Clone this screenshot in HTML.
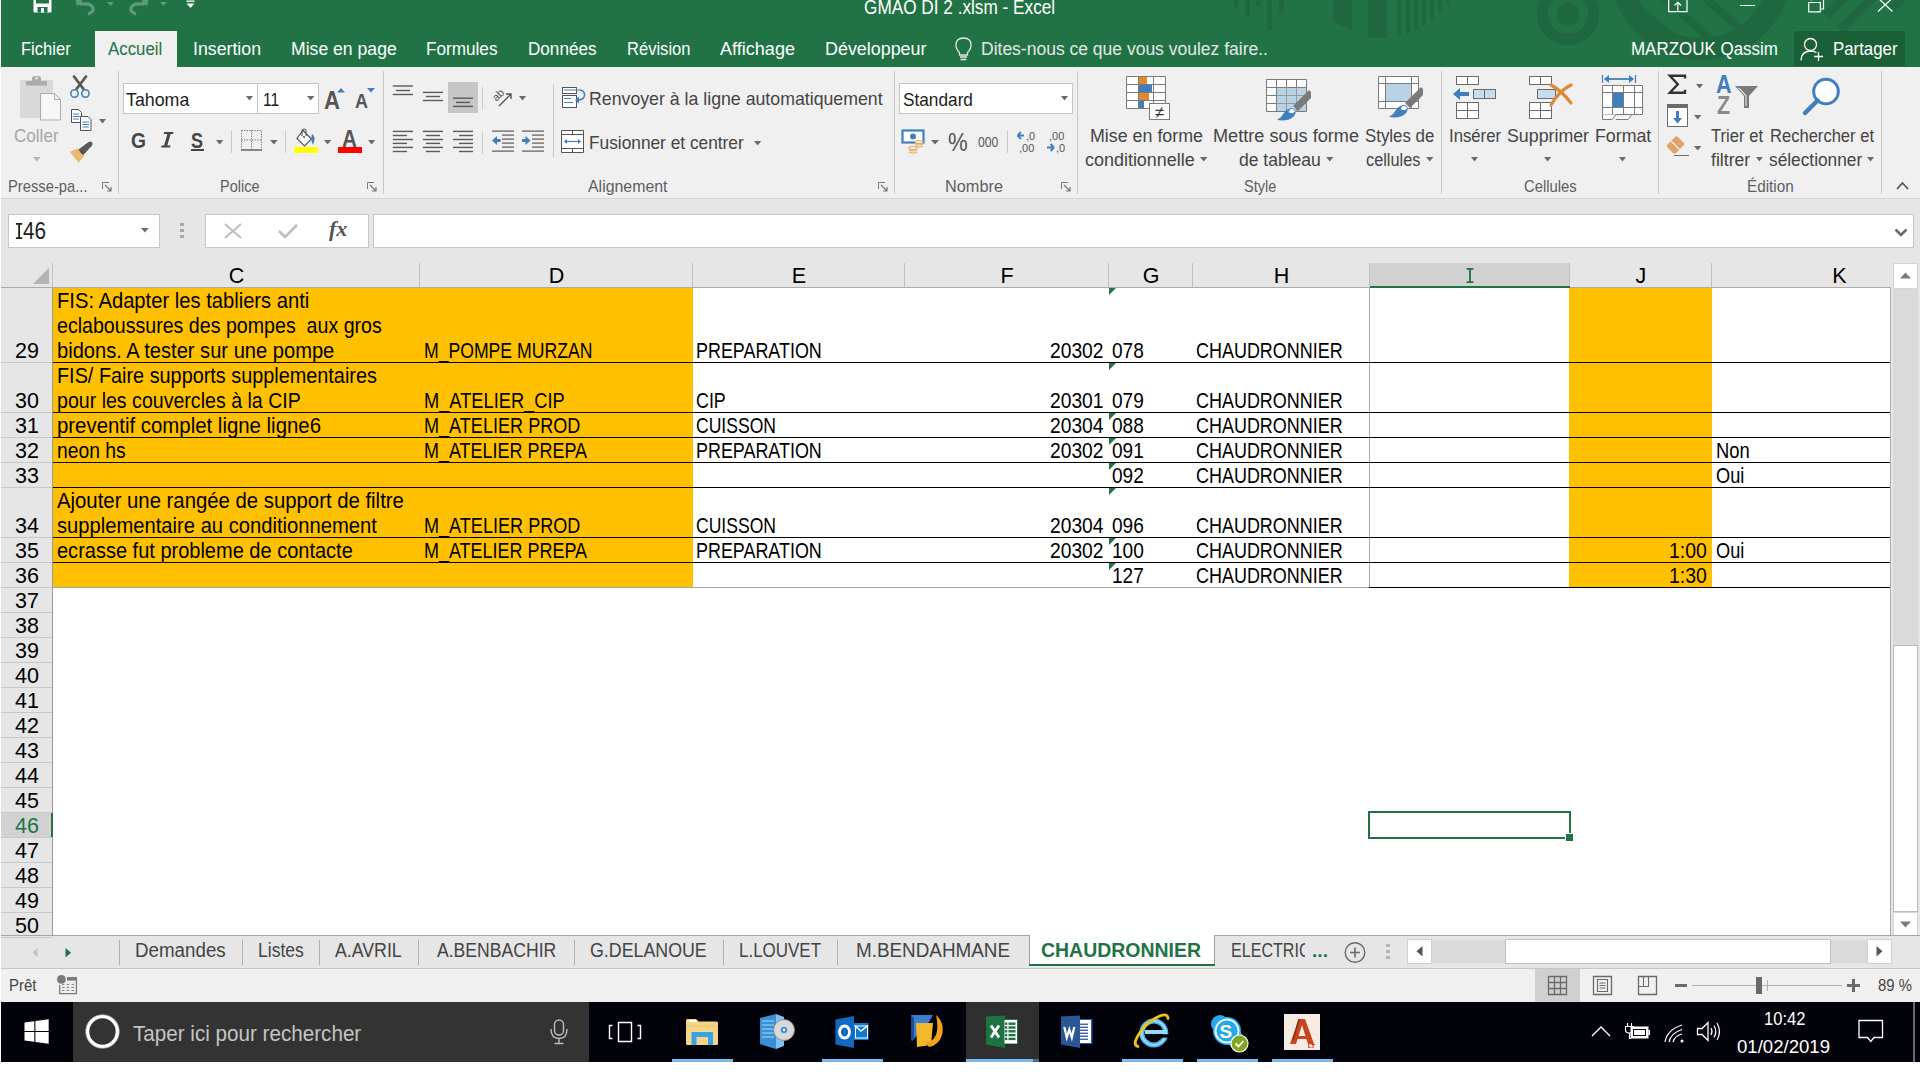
<!DOCTYPE html><html><head><meta charset="utf-8"><style>
html,body{margin:0;padding:0;width:1920px;height:1080px;overflow:hidden;background:#fff;}
body{position:relative;font-family:"Liberation Sans",sans-serif;}
.t{position:absolute;white-space:pre;transform-origin:0 0;}
.r{position:absolute;}
svg.r{overflow:visible;}
</style></head><body>
<div class="r" style="left:1px;top:0px;width:1919px;height:67px;background:#217346;"></div>
<svg class="r" style="left:1200px;top:0px;" width="720" height="67" viewBox="0 0 720 67">
<g fill="#1f683f">
<rect x="34" y="0" width="4" height="7"/><rect x="45" y="0" width="5" height="17"/><rect x="56" y="0" width="5" height="6"/>
<rect x="67" y="0" width="5" height="30"/><rect x="79" y="0" width="5" height="13"/>
<path d="M133 0H152V31L133 21Z"/><rect x="168" y="0" width="19" height="38"/>
<rect x="197" y="0" width="4" height="36"/><rect x="206" y="0" width="4" height="33"/><rect x="214" y="0" width="4" height="30"/>
<rect x="222" y="0" width="4" height="25"/><rect x="230" y="0" width="4" height="21"/><rect x="238" y="0" width="4" height="13"/><rect x="246" y="0" width="3" height="4"/>
</g>
<circle cx="368" cy="14" r="25.5" fill="none" stroke="#1f683f" stroke-width="11"/>
<circle cx="368" cy="14" r="11.5" fill="#1f683f"/>
<clipPath id="inring"><circle cx="501" cy="-31" r="69"/></clipPath>
<circle cx="501" cy="-31" r="80" fill="none" stroke="#1f683f" stroke-width="22"/>
<g stroke="#1f683f" stroke-width="8" clip-path="url(#inring)">
<path d="M432 2 L500 62"/><path d="M455 -10 L525 52"/><path d="M485 -20 L550 38"/>
</g>
<g stroke="#1f683f" stroke-width="9">
<path d="M626 16 L652 -10"/><path d="M640 30 L682 -12"/><path d="M690 10 L720 -20"/>
</g>
</svg>
<div class="r" style="left:95px;top:31px;width:82px;height:36px;background:#f0f0f0;"></div>
<div class="r" style="left:1794px;top:31px;width:111px;height:35px;background:#1a5f36;"></div>
<div class="r" style="left:1px;top:67px;width:1919px;height:131px;background:#f0f0f0;"></div>
<div class="r" style="left:1px;top:198px;width:1919px;height:1px;background:#d5d5d5;"></div>
<div class="r" style="left:1px;top:199px;width:1919px;height:64px;background:#e6e6e6;"></div>
<div class="r" style="left:1px;top:263px;width:1892px;height:25px;background:#e6e6e6;"></div>
<div class="r" style="left:1px;top:288px;width:52px;height:648px;background:#e6e6e6;"></div>
<div class="r" style="left:53px;top:288px;width:1838px;height:647px;background:#ffffff;"></div>
<div class="r" style="left:1891px;top:263px;width:29px;height:673px;background:#e6e6e6;"></div>
<div class="r" style="left:1px;top:935px;width:1919px;height:1px;background:#a6a6a6;"></div>
<div class="r" style="left:1px;top:936px;width:1919px;height:32px;background:#e6e6e6;"></div>
<div class="r" style="left:1px;top:968px;width:1919px;height:1px;background:#c6c6c6;"></div>
<div class="r" style="left:1px;top:969px;width:1919px;height:33px;background:#f0f0f0;"></div>
<div class="r" style="left:1px;top:1002px;width:1919px;height:60px;background:#02030a;"></div>
<div class="r" style="left:419px;top:263px;width:1px;height:24px;background:#c0c0c0;"></div>
<div class="r" style="left:692px;top:263px;width:1px;height:24px;background:#c0c0c0;"></div>
<div class="r" style="left:904px;top:263px;width:1px;height:24px;background:#c0c0c0;"></div>
<div class="r" style="left:1108px;top:263px;width:1px;height:24px;background:#c0c0c0;"></div>
<div class="r" style="left:1192px;top:263px;width:1px;height:24px;background:#c0c0c0;"></div>
<div class="r" style="left:1369px;top:263px;width:1px;height:24px;background:#c0c0c0;"></div>
<div class="r" style="left:1569px;top:263px;width:1px;height:24px;background:#c0c0c0;"></div>
<div class="r" style="left:1711px;top:263px;width:1px;height:24px;background:#c0c0c0;"></div>
<div class="r" style="left:52px;top:263px;width:1px;height:24px;background:#c0c0c0;"></div>
<div class="r" style="left:1px;top:287px;width:1890px;height:1px;background:#ababab;"></div>
<div class="r" style="left:1370px;top:263px;width:199px;height:23px;background:#d2d2d2;"></div>
<div class="r" style="left:1370px;top:286px;width:200px;height:2px;background:#217346;"></div>
<div class="t" style="left:228.73px;top:266.49px;font-size:21.51px;line-height:21.51px;color:#000;">C</div>
<div class="t" style="left:548.73px;top:266.49px;font-size:21.51px;line-height:21.51px;color:#000;">D</div>
<div class="t" style="left:791.83px;top:266.49px;font-size:21.51px;line-height:21.51px;color:#000;">E</div>
<div class="t" style="left:1000.43px;top:266.49px;font-size:21.51px;line-height:21.51px;color:#000;">F</div>
<div class="t" style="left:1142.63px;top:266.49px;font-size:21.51px;line-height:21.51px;color:#000;">G</div>
<div class="t" style="left:1273.73px;top:266.49px;font-size:21.51px;line-height:21.51px;color:#000;">H</div>
<svg class="r" style="left:1466px;top:268px;" width="8" height="15" viewBox="0 0 8 15"><path d="M0.5 0.9H7.5M0.5 14.1H7.5M4 0.9V14.1" stroke="#217346" stroke-width="1.9"/></svg>
<div class="t" style="left:1635.62px;top:266.49px;font-size:21.51px;line-height:21.51px;color:#000;">J</div>
<div class="t" style="left:1832.33px;top:266.49px;font-size:21.51px;line-height:21.51px;color:#000;">K</div>
<svg class="r" style="left:32px;top:267px;" width="18" height="18" viewBox="0 0 18 18"><path d="M17 1V17H1Z" fill="#b4b4b4"/></svg>
<div class="r" style="left:52px;top:288px;width:1px;height:648px;background:#9b9b9b;"></div>
<div class="r" style="left:1px;top:362px;width:51px;height:1px;background:#c8c8c8;"></div>
<div class="r" style="left:1px;top:412px;width:51px;height:1px;background:#c8c8c8;"></div>
<div class="r" style="left:1px;top:437px;width:51px;height:1px;background:#c8c8c8;"></div>
<div class="r" style="left:1px;top:462px;width:51px;height:1px;background:#c8c8c8;"></div>
<div class="r" style="left:1px;top:487px;width:51px;height:1px;background:#c8c8c8;"></div>
<div class="r" style="left:1px;top:537px;width:51px;height:1px;background:#c8c8c8;"></div>
<div class="r" style="left:1px;top:562px;width:51px;height:1px;background:#c8c8c8;"></div>
<div class="r" style="left:1px;top:587px;width:51px;height:1px;background:#c8c8c8;"></div>
<div class="r" style="left:1px;top:612px;width:51px;height:1px;background:#c8c8c8;"></div>
<div class="r" style="left:1px;top:637px;width:51px;height:1px;background:#c8c8c8;"></div>
<div class="r" style="left:1px;top:662px;width:51px;height:1px;background:#c8c8c8;"></div>
<div class="r" style="left:1px;top:687px;width:51px;height:1px;background:#c8c8c8;"></div>
<div class="r" style="left:1px;top:712px;width:51px;height:1px;background:#c8c8c8;"></div>
<div class="r" style="left:1px;top:737px;width:51px;height:1px;background:#c8c8c8;"></div>
<div class="r" style="left:1px;top:762px;width:51px;height:1px;background:#c8c8c8;"></div>
<div class="r" style="left:1px;top:787px;width:51px;height:1px;background:#c8c8c8;"></div>
<div class="r" style="left:1px;top:812px;width:51px;height:1px;background:#c8c8c8;"></div>
<div class="r" style="left:1px;top:837px;width:51px;height:1px;background:#c8c8c8;"></div>
<div class="r" style="left:1px;top:862px;width:51px;height:1px;background:#c8c8c8;"></div>
<div class="r" style="left:1px;top:887px;width:51px;height:1px;background:#c8c8c8;"></div>
<div class="r" style="left:1px;top:912px;width:51px;height:1px;background:#c8c8c8;"></div>
<div class="r" style="left:1px;top:937px;width:51px;height:1px;background:#c8c8c8;"></div>
<div class="t" style="left:15.04px;top:341.19px;font-size:21.51px;line-height:21.51px;color:#000;">29</div>
<div class="t" style="left:15.04px;top:391.19px;font-size:21.51px;line-height:21.51px;color:#000;">30</div>
<div class="t" style="left:15.04px;top:416.19px;font-size:21.51px;line-height:21.51px;color:#000;">31</div>
<div class="t" style="left:15.04px;top:441.19px;font-size:21.51px;line-height:21.51px;color:#000;">32</div>
<div class="t" style="left:15.04px;top:466.19px;font-size:21.51px;line-height:21.51px;color:#000;">33</div>
<div class="t" style="left:15.04px;top:516.19px;font-size:21.51px;line-height:21.51px;color:#000;">34</div>
<div class="t" style="left:15.04px;top:541.19px;font-size:21.51px;line-height:21.51px;color:#000;">35</div>
<div class="t" style="left:15.04px;top:566.19px;font-size:21.51px;line-height:21.51px;color:#000;">36</div>
<div class="t" style="left:15.04px;top:591.19px;font-size:21.51px;line-height:21.51px;color:#000;">37</div>
<div class="t" style="left:15.04px;top:616.19px;font-size:21.51px;line-height:21.51px;color:#000;">38</div>
<div class="t" style="left:15.04px;top:641.19px;font-size:21.51px;line-height:21.51px;color:#000;">39</div>
<div class="t" style="left:15.04px;top:666.19px;font-size:21.51px;line-height:21.51px;color:#000;">40</div>
<div class="t" style="left:15.04px;top:691.19px;font-size:21.51px;line-height:21.51px;color:#000;">41</div>
<div class="t" style="left:15.04px;top:716.19px;font-size:21.51px;line-height:21.51px;color:#000;">42</div>
<div class="t" style="left:15.04px;top:741.19px;font-size:21.51px;line-height:21.51px;color:#000;">43</div>
<div class="t" style="left:15.04px;top:766.19px;font-size:21.51px;line-height:21.51px;color:#000;">44</div>
<div class="t" style="left:15.04px;top:791.19px;font-size:21.51px;line-height:21.51px;color:#000;">45</div>
<div class="r" style="left:1px;top:813px;width:50px;height:24px;background:#d2d2d2;"></div>
<div class="r" style="left:51px;top:813px;width:2px;height:24px;background:#217346;"></div>
<div class="t" style="left:15.04px;top:816.19px;font-size:21.51px;line-height:21.51px;color:#217346;">46</div>
<div class="t" style="left:15.04px;top:841.19px;font-size:21.51px;line-height:21.51px;color:#000;">47</div>
<div class="t" style="left:15.04px;top:866.19px;font-size:21.51px;line-height:21.51px;color:#000;">48</div>
<div class="t" style="left:15.04px;top:891.19px;font-size:21.51px;line-height:21.51px;color:#000;">49</div>
<div class="t" style="left:15.04px;top:916.19px;font-size:21.51px;line-height:21.51px;color:#000;">50</div>
<div class="r" style="left:53px;top:288px;width:640px;height:299px;background:#ffc000;"></div>
<div class="r" style="left:1569px;top:288px;width:143px;height:299px;background:#ffc000;"></div>
<div class="r" style="left:1369px;top:288px;width:1px;height:300px;background:#a6a6a6;"></div>
<div class="r" style="left:53px;top:362px;width:1838px;height:1px;background:#000;"></div>
<div class="r" style="left:53px;top:412px;width:1838px;height:1px;background:#000;"></div>
<div class="r" style="left:53px;top:437px;width:1838px;height:1px;background:#000;"></div>
<div class="r" style="left:53px;top:462px;width:1838px;height:1px;background:#000;"></div>
<div class="r" style="left:53px;top:487px;width:1838px;height:1px;background:#000;"></div>
<div class="r" style="left:53px;top:537px;width:1838px;height:1px;background:#000;"></div>
<div class="r" style="left:53px;top:562px;width:1838px;height:1px;background:#000;"></div>
<div class="r" style="left:53px;top:587px;width:1316px;height:1px;background:#a6a6a6;"></div>
<div class="r" style="left:1369px;top:587px;width:522px;height:1px;background:#000;"></div>
<svg class="r" style="left:1109px;top:288px;" width="8" height="8" viewBox="0 0 8 8"><path d="M0 0H7L0 7Z" fill="#217346"/></svg>
<svg class="r" style="left:1109px;top:363px;" width="8" height="8" viewBox="0 0 8 8"><path d="M0 0H7L0 7Z" fill="#217346"/></svg>
<svg class="r" style="left:1109px;top:413px;" width="8" height="8" viewBox="0 0 8 8"><path d="M0 0H7L0 7Z" fill="#217346"/></svg>
<svg class="r" style="left:1109px;top:438px;" width="8" height="8" viewBox="0 0 8 8"><path d="M0 0H7L0 7Z" fill="#217346"/></svg>
<svg class="r" style="left:1109px;top:463px;" width="8" height="8" viewBox="0 0 8 8"><path d="M0 0H7L0 7Z" fill="#217346"/></svg>
<svg class="r" style="left:1109px;top:488px;" width="8" height="8" viewBox="0 0 8 8"><path d="M0 0H7L0 7Z" fill="#217346"/></svg>
<svg class="r" style="left:1109px;top:538px;" width="8" height="8" viewBox="0 0 8 8"><path d="M0 0H7L0 7Z" fill="#217346"/></svg>
<svg class="r" style="left:1109px;top:563px;" width="8" height="8" viewBox="0 0 8 8"><path d="M0 0H7L0 7Z" fill="#217346"/></svg>
<div class="t" style="left:56.70px;top:290.24px;font-size:21.22px;line-height:21.22px;color:#000;transform:scaleX(0.9507);">FIS: Adapter les tabliers anti</div>
<div class="t" style="left:56.70px;top:315.24px;font-size:21.22px;line-height:21.22px;color:#000;transform:scaleX(0.9240);">eclaboussures des pompes  aux gros</div>
<div class="t" style="left:56.70px;top:340.24px;font-size:21.22px;line-height:21.22px;color:#000;transform:scaleX(0.9478);">bidons. A tester sur une pompe</div>
<div class="t" style="left:56.70px;top:365.24px;font-size:21.22px;line-height:21.22px;color:#000;transform:scaleX(0.9353);">FIS/ Faire supports supplementaires</div>
<div class="t" style="left:56.70px;top:390.24px;font-size:21.22px;line-height:21.22px;color:#000;transform:scaleX(0.9228);">pour les couvercles à la CIP</div>
<div class="t" style="left:56.70px;top:415.24px;font-size:21.22px;line-height:21.22px;color:#000;transform:scaleX(0.9605);">preventif complet ligne ligne6</div>
<div class="t" style="left:56.70px;top:440.24px;font-size:21.22px;line-height:21.22px;color:#000;transform:scaleX(0.9110);">neon hs</div>
<div class="t" style="left:56.70px;top:490.24px;font-size:21.22px;line-height:21.22px;color:#000;transform:scaleX(0.9578);">Ajouter une rangée de support de filtre</div>
<div class="t" style="left:56.70px;top:515.24px;font-size:21.22px;line-height:21.22px;color:#000;transform:scaleX(0.9514);">supplementaire au conditionnement</div>
<div class="t" style="left:56.70px;top:540.24px;font-size:21.22px;line-height:21.22px;color:#000;transform:scaleX(0.9427);">ecrasse fut probleme de contacte</div>
<div class="t" style="left:423.60px;top:340.24px;font-size:21.22px;line-height:21.22px;color:#000;transform:scaleX(0.8304);">M_POMPE MURZAN</div>
<div class="t" style="left:423.60px;top:390.24px;font-size:21.22px;line-height:21.22px;color:#000;transform:scaleX(0.8604);">M_ATELIER_CIP</div>
<div class="t" style="left:423.60px;top:415.24px;font-size:21.22px;line-height:21.22px;color:#000;transform:scaleX(0.8520);">M_ATELIER PROD</div>
<div class="t" style="left:423.60px;top:440.24px;font-size:21.22px;line-height:21.22px;color:#000;transform:scaleX(0.8467);">M_ATELIER PREPA</div>
<div class="t" style="left:423.60px;top:515.24px;font-size:21.22px;line-height:21.22px;color:#000;transform:scaleX(0.8520);">M_ATELIER PROD</div>
<div class="t" style="left:423.60px;top:540.24px;font-size:21.22px;line-height:21.22px;color:#000;transform:scaleX(0.8467);">M_ATELIER PREPA</div>
<div class="t" style="left:696.00px;top:340.24px;font-size:21.22px;line-height:21.22px;color:#000;transform:scaleX(0.8445);">PREPARATION</div>
<div class="t" style="left:696.00px;top:390.24px;font-size:21.22px;line-height:21.22px;color:#000;transform:scaleX(0.8424);">CIP</div>
<div class="t" style="left:696.00px;top:415.24px;font-size:21.22px;line-height:21.22px;color:#000;transform:scaleX(0.8275);">CUISSON</div>
<div class="t" style="left:696.00px;top:440.24px;font-size:21.22px;line-height:21.22px;color:#000;transform:scaleX(0.8445);">PREPARATION</div>
<div class="t" style="left:696.00px;top:515.24px;font-size:21.22px;line-height:21.22px;color:#000;transform:scaleX(0.8275);">CUISSON</div>
<div class="t" style="left:696.00px;top:540.24px;font-size:21.22px;line-height:21.22px;color:#000;transform:scaleX(0.8445);">PREPARATION</div>
<div class="t" style="left:1050.40px;top:340.24px;font-size:21.22px;line-height:21.22px;color:#000;transform:scaleX(0.9065);">20302</div>
<div class="t" style="left:1050.40px;top:390.24px;font-size:21.22px;line-height:21.22px;color:#000;transform:scaleX(0.9065);">20301</div>
<div class="t" style="left:1050.40px;top:415.24px;font-size:21.22px;line-height:21.22px;color:#000;transform:scaleX(0.9065);">20304</div>
<div class="t" style="left:1050.40px;top:440.24px;font-size:21.22px;line-height:21.22px;color:#000;transform:scaleX(0.9065);">20302</div>
<div class="t" style="left:1050.40px;top:515.24px;font-size:21.22px;line-height:21.22px;color:#000;transform:scaleX(0.9065);">20304</div>
<div class="t" style="left:1050.40px;top:540.24px;font-size:21.22px;line-height:21.22px;color:#000;transform:scaleX(0.9065);">20302</div>
<div class="t" style="left:1112.40px;top:340.24px;font-size:21.22px;line-height:21.22px;color:#000;transform:scaleX(0.8984);">078</div>
<div class="t" style="left:1112.40px;top:390.24px;font-size:21.22px;line-height:21.22px;color:#000;transform:scaleX(0.8984);">079</div>
<div class="t" style="left:1112.40px;top:415.24px;font-size:21.22px;line-height:21.22px;color:#000;transform:scaleX(0.8984);">088</div>
<div class="t" style="left:1112.40px;top:440.24px;font-size:21.22px;line-height:21.22px;color:#000;transform:scaleX(0.8984);">091</div>
<div class="t" style="left:1112.40px;top:465.24px;font-size:21.22px;line-height:21.22px;color:#000;transform:scaleX(0.8984);">092</div>
<div class="t" style="left:1112.40px;top:515.24px;font-size:21.22px;line-height:21.22px;color:#000;transform:scaleX(0.8984);">096</div>
<div class="t" style="left:1112.40px;top:540.24px;font-size:21.22px;line-height:21.22px;color:#000;transform:scaleX(0.8984);">100</div>
<div class="t" style="left:1112.40px;top:565.24px;font-size:21.22px;line-height:21.22px;color:#000;transform:scaleX(0.8984);">127</div>
<div class="t" style="left:1195.80px;top:340.24px;font-size:21.22px;line-height:21.22px;color:#000;transform:scaleX(0.8465);">CHAUDRONNIER</div>
<div class="t" style="left:1195.80px;top:390.24px;font-size:21.22px;line-height:21.22px;color:#000;transform:scaleX(0.8465);">CHAUDRONNIER</div>
<div class="t" style="left:1195.80px;top:415.24px;font-size:21.22px;line-height:21.22px;color:#000;transform:scaleX(0.8465);">CHAUDRONNIER</div>
<div class="t" style="left:1195.80px;top:440.24px;font-size:21.22px;line-height:21.22px;color:#000;transform:scaleX(0.8465);">CHAUDRONNIER</div>
<div class="t" style="left:1195.80px;top:465.24px;font-size:21.22px;line-height:21.22px;color:#000;transform:scaleX(0.8465);">CHAUDRONNIER</div>
<div class="t" style="left:1195.80px;top:515.24px;font-size:21.22px;line-height:21.22px;color:#000;transform:scaleX(0.8465);">CHAUDRONNIER</div>
<div class="t" style="left:1195.80px;top:540.24px;font-size:21.22px;line-height:21.22px;color:#000;transform:scaleX(0.8465);">CHAUDRONNIER</div>
<div class="t" style="left:1195.80px;top:565.24px;font-size:21.22px;line-height:21.22px;color:#000;transform:scaleX(0.8465);">CHAUDRONNIER</div>
<div class="t" style="left:1715.70px;top:440.24px;font-size:21.22px;line-height:21.22px;color:#000;transform:scaleX(0.8659);">Non</div>
<div class="t" style="left:1715.70px;top:465.24px;font-size:21.22px;line-height:21.22px;color:#000;transform:scaleX(0.8571);">Oui</div>
<div class="t" style="left:1715.70px;top:540.24px;font-size:21.22px;line-height:21.22px;color:#000;transform:scaleX(0.8571);">Oui</div>
<div class="t" style="left:1669.40px;top:540.24px;font-size:21.22px;line-height:21.22px;color:#000;transform:scaleX(0.9153);">1:00</div>
<div class="t" style="left:1669.40px;top:565.24px;font-size:21.22px;line-height:21.22px;color:#000;transform:scaleX(0.9153);">1:30</div>
<div class="r" style="left:1368px;top:811px;width:203px;height:28px;border:2px solid #217346;box-sizing:border-box;"></div>
<div class="r" style="left:1566px;top:834px;width:7px;height:7px;background:#217346;outline:1px solid #fff;"></div>
<div class="t" style="left:864.40px;top:-3.25px;font-size:20.49px;line-height:20.49px;color:#fff;transform:scaleX(0.8396);">GMAO DI 2 .xlsm - Excel</div>
<div class="t" style="left:20.50px;top:39.96px;font-size:18.90px;line-height:18.90px;color:#fff;transform:scaleX(0.8773);">Fichier</div>
<div class="t" style="left:108.25px;top:39.96px;font-size:18.90px;line-height:18.90px;color:#217346;transform:scaleX(0.8905);">Accueil</div>
<div class="t" style="left:192.50px;top:39.96px;font-size:18.90px;line-height:18.90px;color:#fff;transform:scaleX(0.9384);">Insertion</div>
<div class="t" style="left:290.50px;top:39.96px;font-size:18.90px;line-height:18.90px;color:#fff;transform:scaleX(0.9321);">Mise en page</div>
<div class="t" style="left:425.50px;top:39.96px;font-size:18.90px;line-height:18.90px;color:#fff;transform:scaleX(0.9079);">Formules</div>
<div class="t" style="left:527.50px;top:39.96px;font-size:18.90px;line-height:18.90px;color:#fff;transform:scaleX(0.9056);">Données</div>
<div class="t" style="left:627.00px;top:39.96px;font-size:18.90px;line-height:18.90px;color:#fff;transform:scaleX(0.8763);">Révision</div>
<div class="t" style="left:720.00px;top:39.96px;font-size:18.90px;line-height:18.90px;color:#fff;transform:scaleX(0.9562);">Affichage</div>
<div class="t" style="left:824.50px;top:39.96px;font-size:18.90px;line-height:18.90px;color:#fff;transform:scaleX(0.9474);">Développeur</div>
<div class="t" style="left:980.50px;top:39.96px;font-size:18.90px;line-height:18.90px;color:#e6e6e6;transform:scaleX(0.9263);">Dites-nous ce que vous voulez faire..</div>
<div class="t" style="left:1630.50px;top:39.96px;font-size:18.90px;line-height:18.90px;color:#fff;transform:scaleX(0.8976);">MARZOUK Qassim</div>
<div class="t" style="left:1832.50px;top:39.96px;font-size:18.90px;line-height:18.90px;color:#fff;transform:scaleX(0.8901);">Partager</div>
<div class="t" style="left:7.75px;top:179.42px;font-size:15.99px;line-height:15.99px;color:#5e5e5e;transform:scaleX(0.9223);">Presse-pa...</div>
<div class="t" style="left:219.50px;top:179.42px;font-size:15.99px;line-height:15.99px;color:#5e5e5e;transform:scaleX(0.9070);">Police</div>
<div class="t" style="left:587.50px;top:179.42px;font-size:15.99px;line-height:15.99px;color:#5e5e5e;transform:scaleX(0.9939);">Alignement</div>
<div class="t" style="left:945.00px;top:179.42px;font-size:15.99px;line-height:15.99px;color:#5e5e5e;transform:scaleX(1.0199);">Nombre</div>
<div class="t" style="left:1243.75px;top:179.42px;font-size:15.99px;line-height:15.99px;color:#5e5e5e;transform:scaleX(0.9074);">Style</div>
<div class="t" style="left:1523.50px;top:179.42px;font-size:15.99px;line-height:15.99px;color:#5e5e5e;transform:scaleX(0.9275);">Cellules</div>
<div class="t" style="left:1746.70px;top:179.42px;font-size:15.99px;line-height:15.99px;color:#5e5e5e;transform:scaleX(0.9552);">Édition</div>
<div class="t" style="left:14.40px;top:127.08px;font-size:18.75px;line-height:18.75px;color:#a6a6a6;transform:scaleX(0.9107);">Coller</div>
<div class="t" style="left:589.00px;top:88.98px;font-size:19.04px;line-height:19.04px;color:#444444;transform:scaleX(0.9313);">Renvoyer à la ligne automatiquement</div>
<div class="t" style="left:589.00px;top:132.68px;font-size:19.04px;line-height:19.04px;color:#444444;transform:scaleX(0.9082);">Fusionner et centrer</div>
<div class="t" style="left:1090.00px;top:127.08px;font-size:18.75px;line-height:18.75px;color:#444444;transform:scaleX(0.9513);">Mise en forme</div>
<div class="t" style="left:1084.75px;top:150.83px;font-size:18.75px;line-height:18.75px;color:#444444;transform:scaleX(0.9571);">conditionnelle</div>
<div class="t" style="left:1213.00px;top:127.08px;font-size:18.75px;line-height:18.75px;color:#444444;transform:scaleX(0.9663);">Mettre sous forme</div>
<div class="t" style="left:1238.75px;top:150.83px;font-size:18.75px;line-height:18.75px;color:#444444;transform:scaleX(0.9346);">de tableau</div>
<div class="t" style="left:1364.75px;top:127.08px;font-size:18.75px;line-height:18.75px;color:#444444;transform:scaleX(0.8980);">Styles de</div>
<div class="t" style="left:1365.60px;top:150.83px;font-size:18.75px;line-height:18.75px;color:#444444;transform:scaleX(0.8700);">cellules</div>
<div class="t" style="left:1449.00px;top:127.08px;font-size:18.75px;line-height:18.75px;color:#444444;transform:scaleX(0.8912);">Insérer</div>
<div class="t" style="left:1507.00px;top:127.08px;font-size:18.75px;line-height:18.75px;color:#444444;transform:scaleX(0.9480);">Supprimer</div>
<div class="t" style="left:1595.00px;top:127.08px;font-size:18.75px;line-height:18.75px;color:#444444;transform:scaleX(0.9473);">Format</div>
<div class="t" style="left:1711.20px;top:127.08px;font-size:18.75px;line-height:18.75px;color:#444444;transform:scaleX(0.8860);">Trier et</div>
<div class="t" style="left:1710.80px;top:150.83px;font-size:18.75px;line-height:18.75px;color:#444444;transform:scaleX(0.9409);">filtrer</div>
<div class="t" style="left:1770.00px;top:127.08px;font-size:18.75px;line-height:18.75px;color:#444444;transform:scaleX(0.8831);">Rechercher et</div>
<div class="t" style="left:1768.60px;top:150.83px;font-size:18.75px;line-height:18.75px;color:#444444;transform:scaleX(0.9219);">sélectionner</div>
<div class="r" style="left:118px;top:71px;width:1px;height:123px;background:#c8c8c8;"></div>
<div class="r" style="left:383px;top:71px;width:1px;height:123px;background:#c8c8c8;"></div>
<div class="r" style="left:894px;top:71px;width:1px;height:123px;background:#c8c8c8;"></div>
<div class="r" style="left:1077px;top:71px;width:1px;height:123px;background:#c8c8c8;"></div>
<div class="r" style="left:1441px;top:71px;width:1px;height:123px;background:#c8c8c8;"></div>
<div class="r" style="left:1658px;top:71px;width:1px;height:123px;background:#c8c8c8;"></div>
<div class="r" style="left:1881px;top:71px;width:1px;height:123px;background:#c8c8c8;"></div>
<div class="r" style="left:231px;top:131px;width:1px;height:22px;background:#c8c8c8;"></div>
<div class="r" style="left:285px;top:131px;width:1px;height:22px;background:#c8c8c8;"></div>
<div class="r" style="left:482px;top:87px;width:1px;height:22px;background:#c8c8c8;"></div>
<div class="r" style="left:482px;top:132px;width:1px;height:22px;background:#c8c8c8;"></div>
<div class="r" style="left:553px;top:84px;width:1px;height:73px;background:#c8c8c8;"></div>
<div class="r" style="left:1007px;top:131px;width:1px;height:22px;background:#c8c8c8;"></div>
<svg class="r" style="left:102px;top:182px;" width="10" height="10" viewBox="0 0 10 10"><path d="M0.5 7V0.5H7" fill="none" stroke="#777" stroke-width="1"/><path d="M3 3L9 9M9 5V9H5" fill="none" stroke="#777" stroke-width="1.2"/></svg>
<svg class="r" style="left:367px;top:182px;" width="10" height="10" viewBox="0 0 10 10"><path d="M0.5 7V0.5H7" fill="none" stroke="#777" stroke-width="1"/><path d="M3 3L9 9M9 5V9H5" fill="none" stroke="#777" stroke-width="1.2"/></svg>
<svg class="r" style="left:878px;top:182px;" width="10" height="10" viewBox="0 0 10 10"><path d="M0.5 7V0.5H7" fill="none" stroke="#777" stroke-width="1"/><path d="M3 3L9 9M9 5V9H5" fill="none" stroke="#777" stroke-width="1.2"/></svg>
<svg class="r" style="left:1061px;top:182px;" width="10" height="10" viewBox="0 0 10 10"><path d="M0.5 7V0.5H7" fill="none" stroke="#777" stroke-width="1"/><path d="M3 3L9 9M9 5V9H5" fill="none" stroke="#777" stroke-width="1.2"/></svg>
<svg class="r" style="left:1896px;top:181px;" width="13" height="9" viewBox="0 0 13 9"><path d="M1 8L6.5 2L12 8" fill="none" stroke="#555" stroke-width="1.8"/></svg>
<svg class="r" style="left:19px;top:75px;" width="44" height="47" viewBox="0 0 44 47">
<rect x="1" y="5" width="33" height="38" rx="1.5" fill="#d9d9d9"/>
<path d="M7 6H28V10.5H7Z" fill="#ababab"/><path d="M13 3Q13 1 17.5 1Q22 1 22 3V6H13Z" fill="#ababab"/><circle cx="17.5" cy="3.2" r="1.2" fill="#eee"/>
<path d="M21.5 18.5H35.5L41.5 24.5V45H21.5Z" fill="#f7f7f7" stroke="#ababab" stroke-width="1"/>
<path d="M35.5 18.5V24.5H41.5" fill="none" stroke="#ababab" stroke-width="1"/>
</svg>
<svg class="r" style="left:32.75px;top:157px;" width="7.5" height="4.5" viewBox="0 0 7.5 4.5"><path d="M0 0H7.5L3.75 4.5Z" fill="#b5b5b5"/></svg>
<svg class="r" style="left:66px;top:74px;" width="26" height="26" viewBox="0 0 26 26">
<path d="M8 2.5L17.5 15M20 2.5L10.5 15" stroke="#595959" stroke-width="2.8" stroke-linecap="round"/>
<circle cx="8.5" cy="19.5" r="3.7" fill="none" stroke="#3f7fbf" stroke-width="1.6"/>
<circle cx="19.4" cy="19.5" r="3.7" fill="none" stroke="#3f7fbf" stroke-width="1.6"/>
</svg>
<svg class="r" style="left:70px;top:108px;" width="24" height="24" viewBox="0 0 24 24">
<path d="M1.5 1.5H8.5L11.5 4.5V14.5H1.5Z" fill="#fff" stroke="#505050" stroke-width="1"/>
<path d="M3 6H9M3 8.5H10M3 11H9" stroke="#3f7fbf" stroke-width="1"/>
<path d="M10.5 8.5H18L21 11.5V22.5H10.5Z" fill="#fff" stroke="#505050" stroke-width="1"/>
<path d="M12.5 14H19M12.5 16.5H19M12.5 19H19" stroke="#3f7fbf" stroke-width="1"/>
</svg>
<svg class="r" style="left:99px;top:118.6px;" width="7" height="4.5" viewBox="0 0 7 4.5"><path d="M0 0H7L3.5 4.5Z" fill="#6a6a6a"/></svg>
<svg class="r" style="left:68px;top:140px;" width="26" height="25" viewBox="0 0 26 25">
<path d="M2 12L10 8.5L16 16L10.5 22.3Z" fill="#edb66f"/>
<path d="M2 12L10 8.5L16 16L10.5 22.3Z" fill="none" stroke="#e3a65c" stroke-width="0.6" stroke-dasharray="1 1.5"/>
<path d="M10.5 9.5L20.5 2Q22.5 0.8 24 2.3Q25.3 3.8 24 5.5L15.5 15Z" fill="#595959"/>
<path d="M11.5 10.2L14.8 14" stroke="#444" stroke-width="1.2"/>
</svg>
<div class="r" style="left:123px;top:83px;width:135px;height:31px;background:#fff;border:1px solid #c6c6c6;box-sizing:border-box;"></div>
<div class="r" style="left:257px;top:83px;width:62px;height:31px;background:#fff;border:1px solid #c6c6c6;box-sizing:border-box;"></div>
<div class="t" style="left:126.00px;top:89.58px;font-size:19.04px;line-height:19.04px;color:#1e1e1e;transform:scaleX(0.9358);">Tahoma</div>
<div class="t" style="left:262.50px;top:89.58px;font-size:19.04px;line-height:19.04px;color:#1e1e1e;transform:scaleX(0.8222);">11</div>
<svg class="r" style="left:246px;top:96px;" width="7" height="4.5" viewBox="0 0 7 4.5"><path d="M0 0H7L3.5 4.5Z" fill="#6a6a6a"/></svg>
<svg class="r" style="left:307px;top:96px;" width="7.399999999999977" height="4.5" viewBox="0 0 7.399999999999977 4.5"><path d="M0 0H7.399999999999977L3.6999999999999886 4.5Z" fill="#6a6a6a"/></svg>
<div class="t" style="left:324.00px;top:87.66px;font-size:25.15px;line-height:25.15px;color:#555;font-weight:bold;transform:scaleX(0.8813);">A</div>
<svg class="r" style="left:336.5px;top:87.5px;" width="8" height="4.5" viewBox="0 0 8 4.5"><path d="M0 4.5H8L4 0Z" fill="#3f7fbf"/></svg>
<div class="t" style="left:354.75px;top:91.36px;font-size:20.78px;line-height:20.78px;color:#555;font-weight:bold;transform:scaleX(0.8663);">A</div>
<svg class="r" style="left:366.5px;top:87.5px;" width="8" height="4.5" viewBox="0 0 8 4.5"><path d="M0 0H8L4 4.5Z" fill="#3f7fbf"/></svg>
<div class="t" style="left:130.60px;top:129.36px;font-size:22.97px;line-height:22.97px;color:#444;font-weight:bold;transform:scaleX(0.8395);">G</div>
<svg class="r" style="left:160px;top:131px;" width="15" height="18" viewBox="0 0 15 18"><path d="M4.2 1H13.6L13.1 3H3.7Z M7.4 3H10.6L7.3 14.5H4.1Z M1.6 14.5H10.6L10.1 16.5H1.1Z" fill="#444"/></svg>
<div class="t" style="left:191.00px;top:129.36px;font-size:22.97px;line-height:22.97px;color:#444;font-weight:bold;transform:scaleX(0.7834);">S</div>
<div class="r" style="left:191px;top:149px;width:13px;height:2px;background:#444;"></div>
<svg class="r" style="left:215.6px;top:140px;" width="7.400000000000006" height="4.5" viewBox="0 0 7.400000000000006 4.5"><path d="M0 0H7.400000000000006L3.700000000000003 4.5Z" fill="#6a6a6a"/></svg>
<svg class="r" style="left:240px;top:129px;" width="24" height="23" viewBox="0 0 24 23">
<path d="M1.5 1.5H21.5V20.5M11.5 1.5V20.5M1.5 11H21.5M1.5 1.5V20.5" fill="none" stroke="#6a6a6a" stroke-width="1" stroke-dasharray="1.2 1.4"/>
<path d="M1 21H22" stroke="#6a6a6a" stroke-width="1.6"/>
</svg>
<svg class="r" style="left:269.6px;top:140px;" width="7.649999999999977" height="4.5" viewBox="0 0 7.649999999999977 4.5"><path d="M0 0H7.649999999999977L3.8249999999999886 4.5Z" fill="#6a6a6a"/></svg>
<svg class="r" style="left:294px;top:128px;" width="25" height="26" viewBox="0 0 25 26">
<path d="M9 2.5L17.5 11L10.5 18L3 10.5Z" fill="#fff" stroke="#555" stroke-width="1.2"/>
<path d="M8 8V3Q8 1 10 1Q12 1 12 3V8" fill="none" stroke="#555" stroke-width="1.1"/><circle cx="10" cy="9" r="1" fill="#555"/>
<path d="M18 6Q21 8 20.5 12L19 17Q17.5 13 17 11Z" fill="#3f7fbf"/>
<rect x="0" y="19" width="24" height="6" fill="#ffff00"/>
</svg>
<svg class="r" style="left:323.75px;top:140px;" width="7.25" height="4.5" viewBox="0 0 7.25 4.5"><path d="M0 0H7.25L3.625 4.5Z" fill="#6a6a6a"/></svg>
<div class="t" style="left:342.00px;top:127.89px;font-size:23.40px;line-height:23.40px;color:#555;font-weight:bold;transform:scaleX(0.8819);">A</div>
<div class="r" style="left:338px;top:147px;width:24px;height:6px;background:#ff0000;"></div>
<svg class="r" style="left:367.75px;top:140px;" width="7.25" height="4.5" viewBox="0 0 7.25 4.5"><path d="M0 0H7.25L3.625 4.5Z" fill="#6a6a6a"/></svg>
<svg class="r" style="left:0px;top:0px;" width="1" height="1" viewBox="0 0 1 1"><rect x="392.8" y="85.3" width="20.2" height="1.4" fill="#5a5a5a"/><rect x="395.8" y="89.8" width="14.2" height="1.4" fill="#5a5a5a"/><rect x="392.8" y="93.8" width="20.2" height="1.4" fill="#5a5a5a"/></svg>
<svg class="r" style="left:0px;top:0px;" width="1" height="1" viewBox="0 0 1 1"><rect x="422.9" y="91.7" width="20.1" height="1.4" fill="#5a5a5a"/><rect x="425.9" y="95.8" width="14.1" height="1.4" fill="#5a5a5a"/><rect x="422.9" y="99.8" width="20.1" height="1.4" fill="#5a5a5a"/></svg>
<div class="r" style="left:448px;top:82px;width:30px;height:31px;background:#c6c6c6;"></div>
<svg class="r" style="left:0px;top:0px;" width="1" height="1" viewBox="0 0 1 1"><rect x="453.0" y="97.5" width="20.0" height="1.4" fill="#5a5a5a"/><rect x="456.0" y="101.7" width="14.0" height="1.4" fill="#5a5a5a"/><rect x="453.0" y="105.7" width="20.0" height="1.4" fill="#5a5a5a"/></svg>
<svg class="r" style="left:0px;top:0px;" width="1" height="1" viewBox="0 0 1 1"><rect x="392.8" y="130.7" width="20.2" height="1.4" fill="#5a5a5a"/><rect x="392.8" y="134.8" width="14.2" height="1.4" fill="#5a5a5a"/><rect x="392.8" y="138.8" width="20.2" height="1.4" fill="#5a5a5a"/><rect x="392.8" y="142.7" width="14.2" height="1.4" fill="#5a5a5a"/><rect x="392.8" y="146.7" width="20.2" height="1.4" fill="#5a5a5a"/><rect x="392.8" y="150.8" width="14.2" height="1.4" fill="#5a5a5a"/></svg>
<svg class="r" style="left:0px;top:0px;" width="1" height="1" viewBox="0 0 1 1"><rect x="422.9" y="130.7" width="20.1" height="1.4" fill="#5a5a5a"/><rect x="425.9" y="134.8" width="14.1" height="1.4" fill="#5a5a5a"/><rect x="422.9" y="138.8" width="20.1" height="1.4" fill="#5a5a5a"/><rect x="425.9" y="142.7" width="14.1" height="1.4" fill="#5a5a5a"/><rect x="422.9" y="146.7" width="20.1" height="1.4" fill="#5a5a5a"/><rect x="425.9" y="150.8" width="14.1" height="1.4" fill="#5a5a5a"/></svg>
<svg class="r" style="left:0px;top:0px;" width="1" height="1" viewBox="0 0 1 1"><rect x="453.0" y="130.7" width="20.0" height="1.4" fill="#5a5a5a"/><rect x="459.0" y="134.8" width="14.0" height="1.4" fill="#5a5a5a"/><rect x="453.0" y="138.8" width="20.0" height="1.4" fill="#5a5a5a"/><rect x="459.0" y="142.7" width="14.0" height="1.4" fill="#5a5a5a"/><rect x="453.0" y="146.7" width="20.0" height="1.4" fill="#5a5a5a"/><rect x="459.0" y="150.8" width="14.0" height="1.4" fill="#5a5a5a"/></svg>
<svg class="r" style="left:492px;top:87px;" width="24" height="22" viewBox="0 0 24 22">
<text x="0" y="0" transform="translate(4.5 15) rotate(-45)" font-family="Liberation Sans" font-size="11" fill="#555">ab</text>
<path d="M7 19L19 7M14 7H19V12" fill="none" stroke="#555" stroke-width="1.4"/>
</svg>
<svg class="r" style="left:519px;top:96px;" width="7" height="4.5" viewBox="0 0 7 4.5"><path d="M0 0H7L3.5 4.5Z" fill="#6a6a6a"/></svg>
<svg class="r" style="left:491px;top:130px;" width="56" height="24" viewBox="0 0 56 24">
<g fill="#5a5a5a"><rect x="1" y="0.5" width="22" height="1.2"/><rect x="11" y="4.5" width="12" height="1.2"/><rect x="11" y="8.5" width="12" height="1.2"/><rect x="11" y="12.5" width="12" height="1.2"/><rect x="11" y="16.5" width="12" height="1.2"/><rect x="1" y="20.5" width="22" height="1.2"/></g>
<path d="M1 10.5L6 6V9H9.5V12H6V15Z" fill="#3f7fbf"/>
<g fill="#5a5a5a"><rect x="31" y="0.5" width="22" height="1.2"/><rect x="41" y="4.5" width="12" height="1.2"/><rect x="41" y="8.5" width="12" height="1.2"/><rect x="41" y="12.5" width="12" height="1.2"/><rect x="41" y="16.5" width="12" height="1.2"/><rect x="31" y="20.5" width="22" height="1.2"/></g>
<path d="M39.5 10.5L34.5 6V9H31V12H34.5V15Z" fill="#3f7fbf"/>
</svg>
<svg class="r" style="left:561px;top:86px;" width="26" height="24" viewBox="0 0 26 24">
<rect x="1.5" y="1.5" width="14" height="6" fill="#fff" stroke="#555" stroke-width="1"/>
<rect x="1.5" y="9.5" width="14" height="12" fill="#fff" stroke="#555" stroke-width="1"/>
<path d="M3 4H19M3 12.5H10M3 16.5H12" stroke="#3f7fbf" stroke-width="1.2"/>
<path d="M19 4Q24 5 23.5 9.5Q23 14 16 14" fill="none" stroke="#3f7fbf" stroke-width="1.6"/>
<path d="M14 14L18 10.5V17.5Z" fill="#3f7fbf"/>
</svg>
<svg class="r" style="left:560px;top:129px;" width="26" height="25" viewBox="0 0 26 25">
<path d="M1.5 1.5H23.5V23.5H1.5ZM1.5 5.5H23.5M1.5 19.5H23.5M12.5 1.5V5.5M12.5 19.5V23.5" fill="#fff" stroke="#555" stroke-width="1"/>
<path d="M4.5 12.5H20.5" stroke="#3f7fbf" stroke-width="1.2"/>
<path d="M4 12.5L7 10V15Z M21 12.5L18 10V15Z" fill="#3f7fbf"/>
</svg>
<svg class="r" style="left:753.75px;top:141px;" width="7.25" height="4.5" viewBox="0 0 7.25 4.5"><path d="M0 0H7.25L3.625 4.5Z" fill="#6a6a6a"/></svg>
<div class="r" style="left:899px;top:83px;width:174px;height:31px;background:#fff;border:1px solid #c6c6c6;box-sizing:border-box;"></div>
<div class="t" style="left:902.50px;top:89.58px;font-size:19.04px;line-height:19.04px;color:#1e1e1e;transform:scaleX(0.9057);">Standard</div>
<svg class="r" style="left:1061px;top:96px;" width="7" height="4.5" viewBox="0 0 7 4.5"><path d="M0 0H7L3.5 4.5Z" fill="#6a6a6a"/></svg>
<svg class="r" style="left:901px;top:129px;" width="26" height="26" viewBox="0 0 26 26">
<rect x="1.5" y="1.5" width="21" height="12" fill="#fff" stroke="#3f7fbf" stroke-width="2.2"/>
<circle cx="12" cy="7.5" r="3" fill="#3f7fbf"/>
<g fill="none" stroke="#e3aa62" stroke-width="1.2"><ellipse cx="18" cy="13" rx="4" ry="1.5" fill="#f0f0f0"/><path d="M14 15Q18 17 22 15M14 17Q18 19 22 17"/>
<ellipse cx="12" cy="19" rx="4" ry="1.5" fill="#f0f0f0"/><path d="M8 21Q12 23 16 21M8 23Q12 25 16 23"/></g>
</svg>
<svg class="r" style="left:931px;top:140px;" width="8" height="4.5" viewBox="0 0 8 4.5"><path d="M0 0H8L4.0 4.5Z" fill="#6a6a6a"/></svg>
<div class="t" style="left:947.75px;top:129.55px;font-size:25.58px;line-height:25.58px;color:#555;transform:scaleX(0.8684);">%</div>
<div class="t" style="left:977.75px;top:134.16px;font-size:15.41px;line-height:15.41px;color:#555;transform:scaleX(0.7880);">000</div>
<svg class="r" style="left:1016px;top:129px;" width="56" height="26" viewBox="0 0 56 26">
<path d="M1.5 6.5H8M1.5 6.5L5 3M1.5 6.5L5 10" fill="none" stroke="#3f7fbf" stroke-width="1.8"/>
<text x="10" y="11" font-family="Liberation Sans" font-size="11" fill="#555">,0</text>
<text x="3" y="23" font-family="Liberation Sans" font-size="11" fill="#555">,00</text>
<text x="33" y="11" font-family="Liberation Sans" font-size="11" fill="#555">,00</text>
<path d="M31 18.5H38M38 18.5L34.5 15M38 18.5L34.5 22" fill="none" stroke="#3f7fbf" stroke-width="1.8"/>
<text x="40" y="23" font-family="Liberation Sans" font-size="11" fill="#555">,0</text>
</svg>
<svg class="r" style="left:1125px;top:75px;" width="46" height="46" viewBox="0 0 46 46">
<path d="M1.5 1.5H40.5V33.5H1.5ZM1.5 9.5H40.5M1.5 17.5H40.5M1.5 25.5H40.5M13.5 1.5V33.5M28.5 1.5V33.5" fill="#fff" stroke="#7a7a7a" stroke-width="1"/>
<rect x="14" y="2" width="8" height="7" fill="#e4882f"/><rect x="14" y="10" width="13" height="7" fill="#3f7fbf"/>
<rect x="14" y="18" width="10" height="7" fill="#e4882f"/><rect x="14" y="26" width="5" height="7" fill="#3f7fbf"/>
<rect x="24.5" y="28.5" width="20" height="16" fill="#fff" stroke="#7a7a7a" stroke-width="1"/>
<text x="34.5" y="43" text-anchor="middle" font-family="Liberation Sans" font-size="17" fill="#333">≠</text>
</svg>
<svg class="r" style="left:1199.5px;top:157px;" width="7.5" height="4.5" viewBox="0 0 7.5 4.5"><path d="M0 0H7.5L3.75 4.5Z" fill="#6a6a6a"/></svg>
<svg class="r" style="left:1265px;top:78px;" width="46" height="46" viewBox="0 0 46 46"><path d="M1.5 1.5H41.5V33.5H1.5ZM1.5 9.5H41.5M1.5 17.5H41.5M1.5 25.5H41.5M11.5 1.5V33.5M21.5 1.5V33.5M31.5 1.5V33.5" fill="#fff" stroke="#7a7a7a" stroke-width="1"/>
<rect x="12" y="10" width="29" height="23" fill="#b9d3e6"/>
<path d="M11.5 17.5H41.5M11.5 25.5H41.5M21.5 9.5V33.5M31.5 9.5V33.5" stroke="#9a9a9a" stroke-width="1"/>
<path d="M44 12L46 14V20L33 33L28 28Z" fill="#7a7a7a"/><path d="M29 29L26 32" stroke="#f0f0f0" stroke-width="1.5"/>
<path d="M25.5 30.5Q29.5 29.5 30.5 34Q30.5 39 24 41.5Q18 43 12 42Q17 39 19 35Q21 31 25.5 30.5Z" fill="#3f7fbf"/>
<path d="M25.5 30.5Q29.5 29.5 30.5 34Q28 36.5 24.5 35.5Q22 33.5 25.5 30.5Z" fill="#fff" stroke="#3f7fbf" stroke-width="1"/>
</svg>
<svg class="r" style="left:1325.5px;top:157px;" width="7.5" height="4.5" viewBox="0 0 7.5 4.5"><path d="M0 0H7.5L3.75 4.5Z" fill="#6a6a6a"/></svg>
<svg class="r" style="left:1377px;top:75px;" width="46" height="46" viewBox="0 0 46 46"><path d="M1.5 1.5H41.5V33.5H1.5ZM1.5 8.5H41.5M1.5 26.5H41.5M8.5 1.5V33.5M34.5 1.5V33.5" fill="#fff" stroke="#7a7a7a" stroke-width="1"/>
<rect x="9" y="9" width="25" height="17" fill="#b9d3e6"/>
<path d="M44 12L46 14V20L33 33L28 28Z" fill="#7a7a7a"/><path d="M29 29L26 32" stroke="#f0f0f0" stroke-width="1.5"/>
<path d="M25.5 30.5Q29.5 29.5 30.5 34Q30.5 39 24 41.5Q18 43 12 42Q17 39 19 35Q21 31 25.5 30.5Z" fill="#3f7fbf"/>
<path d="M25.5 30.5Q29.5 29.5 30.5 34Q28 36.5 24.5 35.5Q22 33.5 25.5 30.5Z" fill="#fff" stroke="#3f7fbf" stroke-width="1"/>
</svg>
<svg class="r" style="left:1425.5px;top:157px;" width="7.5" height="4.5" viewBox="0 0 7.5 4.5"><path d="M0 0H7.5L3.75 4.5Z" fill="#6a6a6a"/></svg>
<svg class="r" style="left:1452px;top:75px;" width="46" height="46" viewBox="0 0 46 46">
<g fill="#fff" stroke="#6a6a6a" stroke-width="1"><rect x="4.5" y="1.5" width="22" height="8"/><path d="M15.5 1.5V9.5"/>
<rect x="4.5" y="27.5" width="22" height="16"/><path d="M15.5 27.5V43.5M4.5 35.5H26.5"/>
<rect x="21.5" y="14.5" width="22" height="9" fill="#c8dced"/><path d="M32.5 14.5V23.5"/></g>
<path d="M1 19L8 13V17H17V21H8V25Z" fill="#3f7fbf"/>
</svg>
<svg class="r" style="left:1471px;top:157px;" width="7" height="4.5" viewBox="0 0 7 4.5"><path d="M0 0H7L3.5 4.5Z" fill="#6a6a6a"/></svg>
<svg class="r" style="left:1527px;top:75px;" width="46" height="46" viewBox="0 0 46 46">
<g fill="#fff" stroke="#6a6a6a" stroke-width="1"><rect x="2.5" y="1.5" width="22" height="8"/><path d="M13.5 1.5V9.5"/>
<rect x="2.5" y="27.5" width="22" height="16"/><path d="M13.5 27.5V43.5M2.5 35.5H24.5"/>
<rect x="10.5" y="14.5" width="18" height="9" fill="#c8dced"/></g>
<path d="M24 10Q34 15 44 28" stroke="#e0883a" stroke-width="3.2" fill="none" stroke-linecap="round"/>
<path d="M44 10Q32 16 24 30" stroke="#e0883a" stroke-width="3.2" fill="none" stroke-linecap="round"/>
</svg>
<svg class="r" style="left:1543.75px;top:157px;" width="7.25" height="4.5" viewBox="0 0 7.25 4.5"><path d="M0 0H7.25L3.625 4.5Z" fill="#6a6a6a"/></svg>
<svg class="r" style="left:1600px;top:73px;" width="46" height="48" viewBox="0 0 46 48">
<path d="M2.5 2V10M35.5 2V10" stroke="#3f7fbf" stroke-width="1.2"/>
<path d="M5 6H33" stroke="#3f7fbf" stroke-width="1.8"/><path d="M4 6L9 2V10Z M34 6L29 2V10Z" fill="#3f7fbf"/>
<path d="M2.5 12.5H42.5V41.5H2.5ZM2.5 19.5H42.5M2.5 34.5H42.5M12.5 12.5V41.5M23.5 12.5V41.5M34.5 12.5V41.5" fill="#fff" stroke="#7a7a7a" stroke-width="1"/>
<rect x="13" y="20" width="10" height="14" fill="#3f7fbf"/>
<path d="M2.5 41.5V46.5H12L16 41.5M16 46.5H28L32 41.5" fill="#fff" stroke="#7a7a7a" stroke-width="1"/>
</svg>
<svg class="r" style="left:1619px;top:157px;" width="7" height="4.5" viewBox="0 0 7 4.5"><path d="M0 0H7L3.5 4.5Z" fill="#6a6a6a"/></svg>
<svg class="r" style="left:1667px;top:74px;" width="22" height="21" viewBox="0 0 22 21"><path d="M18 4.5V1.8H2.8L10.8 10.3L2.8 18.8H18V15.8" fill="none" stroke="#333" stroke-width="2.4" stroke-linejoin="miter"/></svg>
<svg class="r" style="left:1695.9px;top:84px;" width="7.099999999999909" height="4.5" viewBox="0 0 7.099999999999909 4.5"><path d="M0 0H7.099999999999909L3.5499999999999545 4.5Z" fill="#6a6a6a"/></svg>
<svg class="r" style="left:1666px;top:103px;" width="24" height="25" viewBox="0 0 24 25">
<rect x="1.5" y="1.5" width="20" height="22" fill="#fff" stroke="#6a6a6a" stroke-width="1"/>
<rect x="1" y="1" width="21" height="4" fill="#6a6a6a"/>
<path d="M10 8H13V15H16L11.5 20.5L7 15H10Z" fill="#3f7fbf"/>
</svg>
<svg class="r" style="left:1693.85px;top:114.7px;" width="7.4500000000000455" height="4.5" viewBox="0 0 7.4500000000000455 4.5"><path d="M0 0H7.4500000000000455L3.7250000000000227 4.5Z" fill="#6a6a6a"/></svg>
<svg class="r" style="left:1666px;top:135px;" width="26" height="22" viewBox="0 0 26 22">
<path d="M9 2Q10.5 0.5 12 2L17.5 7.5Q19 9 17.5 10.5L10 18Q8.5 19.5 7 18L1.5 12.5Q0 11 1.5 9.5Z" fill="#e3a26a"/>
<path d="M5 6L13.5 14.5" stroke="#f0f0f0" stroke-width="1.2"/>
<path d="M8 20.5H23" stroke="#6a6a6a" stroke-width="1"/>
</svg>
<svg class="r" style="left:1693.85px;top:146px;" width="7.4500000000000455" height="4.5" viewBox="0 0 7.4500000000000455 4.5"><path d="M0 0H7.4500000000000455L3.7250000000000227 4.5Z" fill="#6a6a6a"/></svg>
<div class="t" style="left:1716.20px;top:73.16px;font-size:24.85px;line-height:24.85px;color:#3f7fbf;font-weight:bold;transform:scaleX(0.8693);">A</div>
<div class="t" style="left:1716.90px;top:94.16px;font-size:24.85px;line-height:24.85px;color:#8a8a8a;font-weight:bold;transform:scaleX(0.8626);">Z</div>
<svg class="r" style="left:1734px;top:85px;" width="26" height="24" viewBox="0 0 26 24"><path d="M1 1H24L15 11V23H10V11Z" fill="#7a7a7a"/><path d="M4 3L11.5 11V21H12.5V10.5L5.5 3Z" fill="#f0f0f0"/></svg>
<svg class="r" style="left:1756.4px;top:157px;" width="6.7999999999999545" height="4.5" viewBox="0 0 6.7999999999999545 4.5"><path d="M0 0H6.7999999999999545L3.3999999999999773 4.5Z" fill="#6a6a6a"/></svg>
<svg class="r" style="left:1800px;top:75px;" width="44" height="44" viewBox="0 0 44 44">
<circle cx="26" cy="16.5" r="12.3" fill="#fff" stroke="#3f7fbf" stroke-width="3"/>
<path d="M17.5 25.5L5 38" stroke="#3f7fbf" stroke-width="4.5" stroke-linecap="round"/>
</svg>
<svg class="r" style="left:1866.9px;top:157px;" width="7.099999999999909" height="4.5" viewBox="0 0 7.099999999999909 4.5"><path d="M0 0H7.099999999999909L3.5499999999999545 4.5Z" fill="#6a6a6a"/></svg>
<svg class="r" style="left:32px;top:0px;" width="22" height="14" viewBox="0 0 22 14">
<path d="M1.5 -2V11.5Q1.5 12.5 2.5 12.5H18.5Q19.5 12.5 19.5 11.5V-2Z" fill="#fff"/>
<rect x="4" y="-2" width="13" height="5.5" fill="#217346"/>
<rect x="5.5" y="7" width="10" height="5.5" fill="#217346"/><rect x="9" y="8" width="3" height="4.5" fill="#fff"/>
</svg>
<svg class="r" style="left:74px;top:0px;" width="24" height="16" viewBox="0 0 24 16"><path d="M3 1Q5 4 9 4Q17 3 19 8Q20 12 14 14" fill="none" stroke="#5d9c78" stroke-width="3.2"/><path d="M1 -2L3 6L9 1Z" fill="#5d9c78"/></svg>
<svg class="r" style="left:107px;top:1.5px;" width="7" height="4" viewBox="0 0 7 4"><path d="M0 0H7L3.5 4Z" fill="#5d9c78"/></svg>
<svg class="r" style="left:126px;top:0px;" width="24" height="16" viewBox="0 0 24 16"><path d="M21 1Q19 4 15 4Q7 3 5 8Q4 12 10 14" fill="none" stroke="#5d9c78" stroke-width="3.2"/><path d="M23 -2L21 6L15 1Z" fill="#5d9c78"/></svg>
<svg class="r" style="left:160px;top:1.5px;" width="7" height="4" viewBox="0 0 7 4"><path d="M0 0H7L3.5 4Z" fill="#5d9c78"/></svg>
<svg class="r" style="left:186px;top:0px;" width="10" height="9" viewBox="0 0 10 9"><rect x="0.5" y="0.5" width="8" height="1.3" fill="#fff"/><path d="M0.5 3.5H8.5L4.5 8Z" fill="#fff"/></svg>
<svg class="r" style="left:1668px;top:0px;" width="21" height="13" viewBox="0 0 21 13"><path d="M0.7 -1V11.7H19V-1M9.8 3V11.7M6.5 5.5L9.8 2.3L13.1 5.5" fill="none" stroke="#fff" stroke-width="1.2"/></svg>
<div class="r" style="left:1740px;top:5px;width:15px;height:1.2000000000000002px;background:#fff;"></div>
<svg class="r" style="left:1808px;top:0px;" width="18" height="13" viewBox="0 0 18 13"><path d="M0.7 2.5H12.3V11.9H0.7Z" fill="none" stroke="#fff" stroke-width="1.2"/><path d="M3.5 0.5V-1M3.5 -1H15.5V9H12.3" fill="none" stroke="#fff" stroke-width="1.2"/></svg>
<svg class="r" style="left:1877px;top:-2px;" width="17" height="14" viewBox="0 0 17 14"><path d="M1 0L15.5 13.5M15.5 0L1 13.5" stroke="#fff" stroke-width="1.2"/></svg>
<svg class="r" style="left:955px;top:37px;" width="18" height="24" viewBox="0 0 18 24">
<path d="M4.5 15.5Q1 12.5 1 8Q1 1 8.5 1Q16 1 16 8Q16 12.5 12.5 15.5V18H4.5Z" fill="none" stroke="#e6e6e6" stroke-width="1.3"/>
<path d="M5 20H12M5.5 22.5H11.5" stroke="#e6e6e6" stroke-width="1.3"/>
</svg>
<svg class="r" style="left:1800px;top:37px;" width="26" height="26" viewBox="0 0 26 26">
<circle cx="10.5" cy="7.5" r="6" fill="none" stroke="#fff" stroke-width="1.3"/>
<path d="M1 23.5Q1 14.5 10.5 14Q14 14 16.5 15.5" fill="none" stroke="#fff" stroke-width="1.3"/>
<path d="M18.5 15V24M14 19.5H23" stroke="#fff" stroke-width="1.3"/>
</svg>
<div class="r" style="left:8px;top:214px;width:152px;height:34px;background:#fff;border:1px solid #c6c6c6;box-sizing:border-box;"></div>
<svg class="r" style="left:15px;top:223px;" width="9" height="16" viewBox="0 0 9 16"><path d="M0.9 0.9H7.3M0.9 15.1H7.3M4.1 0.9V15.1" stroke="#1e1e1e" stroke-width="1.8"/></svg>
<div class="t" style="left:23.20px;top:220.11px;font-size:23.26px;line-height:23.26px;color:#1e1e1e;transform:scaleX(0.8913);">46</div>
<svg class="r" style="left:140.6px;top:228.2px;" width="7.700000000000017" height="4.5" viewBox="0 0 7.700000000000017 4.5"><path d="M0 0H7.700000000000017L3.8500000000000085 4.5Z" fill="#6a6a6a"/></svg>
<div class="r" style="left:180px;top:223px;width:4px;height:3px;background:#a8a8a8;"></div>
<div class="r" style="left:180px;top:229px;width:4px;height:3px;background:#a8a8a8;"></div>
<div class="r" style="left:180px;top:235px;width:4px;height:3px;background:#a8a8a8;"></div>
<div class="r" style="left:205px;top:214px;width:164px;height:34px;background:#fff;border:1px solid #c6c6c6;box-sizing:border-box;"></div>
<svg class="r" style="left:222px;top:222px;" width="22" height="18" viewBox="0 0 22 18"><path d="M3 2L19 16M19 2L3 16" stroke="#bdbdbd" stroke-width="2"/></svg>
<svg class="r" style="left:276px;top:222px;" width="24" height="18" viewBox="0 0 24 18"><path d="M3 9L9 15L21 3" fill="none" stroke="#bdbdbd" stroke-width="2.6"/></svg>
<div class="t" style="left:329px;top:218px;font-family:&quot;Liberation Serif&quot;;font-style:italic;font-weight:bold;font-size:22px;line-height:22px;color:#555;">fx</div>
<div class="r" style="left:373px;top:214px;width:1541px;height:34px;background:#fff;border:1px solid #c6c6c6;box-sizing:border-box;"></div>
<svg class="r" style="left:1894px;top:228px;" width="14" height="10" viewBox="0 0 14 10"><path d="M1.5 1.5L7 7L12.5 1.5" fill="none" stroke="#6a6a6a" stroke-width="2.5"/></svg>
<div class="r" style="left:1893px;top:288px;width:25px;height:624px;background:#dadada;"></div>
<div class="r" style="left:1893px;top:263px;width:25px;height:26px;background:#fff;border:1px solid #d5d5d5;box-sizing:border-box;"></div>
<svg class="r" style="left:1900px;top:272px;" width="12" height="7" viewBox="0 0 12 7"><path d="M0 6.5H11L5.5 0.5Z" fill="#7a7a7a"/></svg>
<div class="r" style="left:1893px;top:645px;width:25px;height:267px;background:#fff;border:1px solid #bdbdbd;box-sizing:border-box;"></div>
<div class="r" style="left:1893px;top:912px;width:25px;height:24px;background:#fff;border:1px solid #d5d5d5;box-sizing:border-box;"></div>
<svg class="r" style="left:1900px;top:921px;" width="12" height="7" viewBox="0 0 12 7"><path d="M0 0.5H11L5.5 6.5Z" fill="#7a7a7a"/></svg>
<div class="r" style="left:1890px;top:288px;width:1px;height:648px;background:#ababab;"></div>
<svg class="r" style="left:32px;top:948px;" width="6" height="10" viewBox="0 0 6 10"><path d="M5.5 0V9L0.5 4.5Z" fill="#c0c0c0"/></svg>
<svg class="r" style="left:65px;top:948px;" width="7" height="10" viewBox="0 0 7 10"><path d="M0.5 0V9.5L6 4.75Z" fill="#217346"/></svg>
<div class="r" style="left:119px;top:940px;width:1px;height:25px;background:#b0b0b0;"></div>
<div class="r" style="left:242px;top:940px;width:1px;height:25px;background:#b0b0b0;"></div>
<div class="r" style="left:319px;top:940px;width:1px;height:25px;background:#b0b0b0;"></div>
<div class="r" style="left:418px;top:940px;width:1px;height:25px;background:#b0b0b0;"></div>
<div class="r" style="left:574px;top:940px;width:1px;height:25px;background:#b0b0b0;"></div>
<div class="r" style="left:723px;top:940px;width:1px;height:25px;background:#b0b0b0;"></div>
<div class="r" style="left:837px;top:940px;width:1px;height:25px;background:#b0b0b0;"></div>
<div class="t" style="left:135.00px;top:940.72px;font-size:19.77px;line-height:19.77px;color:#444444;transform:scaleX(0.9493);">Demandes</div>
<div class="t" style="left:257.50px;top:940.72px;font-size:19.77px;line-height:19.77px;color:#444444;transform:scaleX(0.8861);">Listes</div>
<div class="t" style="left:334.50px;top:940.72px;font-size:19.77px;line-height:19.77px;color:#444444;transform:scaleX(0.8978);">A.AVRIL</div>
<div class="t" style="left:437.00px;top:940.72px;font-size:19.77px;line-height:19.77px;color:#444444;transform:scaleX(0.8899);">A.BENBACHIR</div>
<div class="t" style="left:589.50px;top:940.72px;font-size:19.77px;line-height:19.77px;color:#444444;transform:scaleX(0.9007);">G.DELANOUE</div>
<div class="t" style="left:738.75px;top:940.72px;font-size:19.77px;line-height:19.77px;color:#444444;transform:scaleX(0.8580);">L.LOUVET</div>
<div class="t" style="left:855.50px;top:940.72px;font-size:19.77px;line-height:19.77px;color:#444444;transform:scaleX(0.9538);">M.BENDAHMANE</div>
<div class="r" style="left:1029px;top:935px;width:186px;height:31px;background:#fff;border:1px solid #9e9e9e;box-sizing:border-box;border-top:none;"></div>
<div class="r" style="left:1029px;top:964px;width:186px;height:2px;background:#217346;"></div>
<div class="t" style="left:1041.25px;top:940.72px;font-size:19.77px;line-height:19.77px;color:#217346;font-weight:bold;transform:scaleX(0.9844);">CHAUDRONNIER</div>
<div class="r" style="left:1214px;top:935px;width:706px;height:1px;background:#a6a6a6;"></div>
<div class="r" style="left:1230px;top:936px;width:75px;height:30px;overflow:hidden">
<div class="t" style="left:0.50px;top:4.72px;font-size:19.77px;line-height:19.77px;color:#444444;transform:scaleX(0.8133);">ELECTRIC</div>
</div>
<div class="t" style="left:1312.00px;top:941.37px;font-size:19.00px;line-height:19.00px;color:#217346;font-weight:bold;transform:scaleX(1.0109);">...</div>
<svg class="r" style="left:1344px;top:941px;" width="23" height="23" viewBox="0 0 23 23"><circle cx="11" cy="11.5" r="9.8" fill="none" stroke="#6a6a6a" stroke-width="1.4"/><path d="M11 6.5V16.5M6 11.5H16" stroke="#6a6a6a" stroke-width="1.6"/></svg>
<div class="r" style="left:1386px;top:944px;width:4px;height:3px;background:#b5b5b5;"></div>
<div class="r" style="left:1386px;top:950px;width:4px;height:3px;background:#b5b5b5;"></div>
<div class="r" style="left:1386px;top:956px;width:4px;height:3px;background:#b5b5b5;"></div>
<div class="r" style="left:1407px;top:939px;width:25px;height:25px;background:#fff;border:1px solid #d0d0d0;box-sizing:border-box;"></div>
<svg class="r" style="left:1416px;top:946px;" width="7" height="11" viewBox="0 0 7 11"><path d="M6.5 0V10.5L0.5 5.25Z" fill="#555"/></svg>
<div class="r" style="left:1432px;top:940px;width:435px;height:23px;background:#dadada;"></div>
<div class="r" style="left:1505px;top:939px;width:326px;height:25px;background:#fff;border:1px solid #c0c0c0;box-sizing:border-box;"></div>
<div class="r" style="left:1867px;top:939px;width:25px;height:25px;background:#fff;border:1px solid #d0d0d0;box-sizing:border-box;"></div>
<svg class="r" style="left:1876px;top:946px;" width="7" height="11" viewBox="0 0 7 11"><path d="M0.5 0V10.5L6.5 5.25Z" fill="#555"/></svg>
<div class="t" style="left:8.75px;top:977.37px;font-size:17.22px;line-height:17.22px;color:#444444;transform:scaleX(0.8706);">Prêt</div>
<svg class="r" style="left:56px;top:974px;" width="23" height="21" viewBox="0 0 23 21">
<path d="M3.7 11V19.6H20.4V6" fill="none" stroke="#7a7a7a" stroke-width="1.3"/>
<rect x="11" y="3" width="10" height="3.6" fill="#7a7a7a"/>
<circle cx="5.4" cy="5.4" r="4.4" fill="#7a7a7a"/>
<path d="M6 10.4H8.5M10.7 10.4H13.2M15.5 10.4H18M6 13.4H8.5M10.7 13.4H13.2M15.5 13.4H18M6 16.4H8.5M10.7 16.4H13.2M15.5 16.4H18" stroke="#7a7a7a" stroke-width="1"/>
</svg>
<div class="r" style="left:1535px;top:969px;width:45px;height:33px;background:#d0d0d0;"></div>
<svg class="r" style="left:1547px;top:975px;" width="22" height="21" viewBox="0 0 22 21"><path d="M1.5 1.5H19.5V19.5H1.5ZM1.5 7.5H19.5M1.5 13.5H19.5M7.5 1.5V19.5M13.5 1.5V19.5" fill="none" stroke="#6a6a6a" stroke-width="1.3"/></svg>
<svg class="r" style="left:1592px;top:975px;" width="22" height="21" viewBox="0 0 22 21"><path d="M1.5 1.5H19.5V19.5H1.5Z" fill="none" stroke="#6a6a6a" stroke-width="1.3"/><path d="M5.5 4.5H15.5V16.5H5.5Z" fill="none" stroke="#6a6a6a" stroke-width="1.1"/><path d="M7.5 8H13.5M7.5 10.5H13.5M7.5 13H13.5" stroke="#6a6a6a" stroke-width="1"/></svg>
<svg class="r" style="left:1637px;top:975px;" width="22" height="21" viewBox="0 0 22 21"><path d="M1.5 1.5H19.5V19.5H1.5Z" fill="none" stroke="#6a6a6a" stroke-width="1.3"/><path d="M1.5 11.5H11.5V1.5M6.5 1.5V11.5" fill="none" stroke="#6a6a6a" stroke-width="1.1"/></svg>
<div class="r" style="left:1675px;top:984px;width:12px;height:3px;background:#6a6a6a;"></div>
<div class="r" style="left:1692px;top:985px;width:150px;height:1px;background:#b0b0b0;"></div>
<div class="r" style="left:1756px;top:977px;width:6px;height:17px;background:#6a6a6a;"></div>
<div class="r" style="left:1767px;top:980px;width:1px;height:11px;background:#b0b0b0;"></div>
<div class="r" style="left:1847px;top:984px;width:13px;height:3px;background:#6a6a6a;"></div>
<div class="r" style="left:1852px;top:979px;width:3px;height:13px;background:#6a6a6a;"></div>
<div class="t" style="left:1878.30px;top:977.93px;font-size:16.86px;line-height:16.86px;color:#444444;transform:scaleX(0.8848);">89 %</div>
<svg class="r" style="left:24px;top:1019px;" width="26" height="26" viewBox="0 0 26 26">
<path d="M0.5 3.6L10.3 2.3V11.9H0.5Z M11.4 2.1L24.7 0.3V11.9H11.4Z M0.5 13H10.3V22.7L0.5 21.4Z M11.4 13H24.7V24.7L11.4 22.9Z" fill="#fff"/>
</svg>
<div class="r" style="left:73px;top:1002px;width:516px;height:60px;background:#333333;"></div>
<svg class="r" style="left:85px;top:1014px;" width="36" height="36" viewBox="0 0 36 36"><circle cx="17.5" cy="17.5" r="15" fill="none" stroke="#fff" stroke-width="3.6"/><circle cx="17.5" cy="17.5" r="16.8" fill="none" stroke="#9a9a9a" stroke-width="0.8"/></svg>
<div class="t" style="left:133.40px;top:1022.01px;font-size:22.97px;line-height:22.97px;color:#c4c4c4;transform:scaleX(0.8984);">Taper ici pour rechercher</div>
<svg class="r" style="left:549px;top:1019px;" width="20" height="27" viewBox="0 0 20 27">
<rect x="5.5" y="1" width="9" height="15" rx="4.5" fill="none" stroke="#bdbdbd" stroke-width="1.4"/>
<path d="M2 10Q2 19.5 10 19.5Q18 19.5 18 10M10 19.5V24.5M5.5 24.5H14.5" fill="none" stroke="#bdbdbd" stroke-width="1.4"/>
</svg>
<svg class="r" style="left:608px;top:1021px;" width="34" height="23" viewBox="0 0 34 23">
<path d="M10.5 1.5H23.5V20.5H10.5Z" fill="none" stroke="#fff" stroke-width="1.4"/>
<path d="M4.5 4.5H1.5V17.5H4.5M29.5 4.5H32.5V17.5H29.5" fill="none" stroke="#fff" stroke-width="1.4"/>
</svg>
<div class="r" style="left:672px;top:1059px;width:61px;height:3px;background:#76b9ed;"></div>
<svg class="r" style="left:685px;top:1018px;" width="34" height="28" viewBox="0 0 34 28">
<path d="M1 2.5Q1 1 2.5 1H11L13.5 3.5H31.5Q33 3.5 33 5V25.5Q33 27 31.5 27H2.5Q1 27 1 25.5Z" fill="#f5d58a"/>
<rect x="4" y="2" width="8" height="2" fill="#fff"/>
<path d="M1 8H33" stroke="#e8bf64" stroke-width="1"/>
<path d="M6.5 27V14H28V27H23V19H11.5V27Z" fill="#35a3e8"/>
</svg>
<svg class="r" style="left:758px;top:1013px;" width="38" height="38" viewBox="0 0 38 38">
<path d="M2 5L18 1V36L2 31Z" fill="#3b8fd6"/><path d="M18 1L26 4V33L18 36Z" fill="#7ec3f1"/>
<path d="M4 8H16M4 12H16M4 16H16M4 20H16M4 24H16" stroke="#a9dbfb" stroke-width="1"/>
<circle cx="26" cy="17" r="10.5" fill="#d9d9d9"/><circle cx="26" cy="17" r="10.5" fill="none" stroke="#8c8c8c" stroke-width="1"/>
<circle cx="26" cy="17" r="3.2" fill="#4a90d9"/><circle cx="26" cy="17" r="1.2" fill="#fff"/>
</svg>
<div class="r" style="left:822px;top:1059px;width:61px;height:3px;background:#76b9ed;"></div>
<svg class="r" style="left:835px;top:1015px;" width="34" height="34" viewBox="0 0 34 34">
<path d="M0.5 4.5L19 1V33L0.5 29.5Z" fill="#0f6ac1"/>
<ellipse cx="9.5" cy="17" rx="5" ry="6" fill="none" stroke="#fff" stroke-width="2.8"/>
<rect x="19" y="8" width="14.5" height="17" fill="#1479cf"/>
<path d="M19.5 10.5L26 16L33 10.5" fill="none" stroke="#fff" stroke-width="1.5"/>
<rect x="20.5" y="11" width="12" height="12" fill="none" stroke="#fff" stroke-width="1"/>
</svg>
<svg class="r" style="left:909px;top:1013px;" width="37" height="36" viewBox="0 0 37 36">
<path d="M2 2H24L20 9L3 28Z" fill="#3a7fcf"/><path d="M2 2V28L5 25V5Z" fill="#1d4f8f"/>
<path d="M7 10H24L22 32L8 34Z" fill="#f2b72b"/>
<path d="M27 2Q36 10 33 22Q30 32 20 34L17 30Q27 27 28 18Q29 10 27 2Z" fill="#f4a21a"/>
</svg>
<div class="r" style="left:966px;top:1002px;width:73px;height:60px;background:#2f2f2f;"></div>
<div class="r" style="left:966px;top:1059px;width:67px;height:3px;background:#76b9ed;"></div>
<div class="r" style="left:1033px;top:1059px;width:6px;height:3px;background:#4a6e8a;"></div>
<svg class="r" style="left:980px;top:1010px;" width="42" height="42" viewBox="0 0 42 42">
<path d="M6 6.5L25 5.5V38L6 34.5Z" fill="#1f7244"/>
<rect x="25" y="9" width="13" height="25" fill="#1f7244"/>
<rect x="24.5" y="10" width="12.5" height="23.5" fill="#fff"/>
<g fill="#1f7244"><rect x="28.5" y="12.5" width="7" height="2.4"/><rect x="28.5" y="16.3" width="7" height="2.4"/><rect x="28.5" y="20.1" width="7" height="2.4"/><rect x="28.5" y="23.9" width="7" height="2.4"/><rect x="28.5" y="27.7" width="7" height="2.4"/>
<rect x="25" y="12.5" width="2.3" height="2.4"/><rect x="25" y="16.3" width="2.3" height="2.4"/><rect x="25" y="20.1" width="2.3" height="2.4"/><rect x="25" y="23.9" width="2.3" height="2.4"/><rect x="25" y="27.7" width="2.3" height="2.4"/></g>
<path d="M11 15.5L19 27.5M19 15.5L11 27.5" stroke="#fff" stroke-width="2.8"/>
</svg>
<svg class="r" style="left:1056px;top:1010px;" width="42" height="42" viewBox="0 0 42 42">
<path d="M5 6.5L24 5.5V38L5 34.5Z" fill="#2b5797"/>
<rect x="24" y="9" width="12.5" height="25" fill="#2b5797"/>
<rect x="24" y="10" width="11" height="23" fill="#fff"/>
<g fill="#2b5797"><rect x="24" y="13.6" width="8" height="1.3"/><rect x="24" y="16.6" width="8" height="1.3"/><rect x="24" y="19.6" width="8" height="1.3"/><rect x="24" y="22.6" width="8" height="1.3"/><rect x="24" y="25.6" width="8" height="1.3"/><rect x="24" y="28.6" width="8" height="1.3"/></g>
<path d="M8.3 17L10.8 27.5L13.3 19.5L15.8 27.5L18.3 17" fill="none" stroke="#fff" stroke-width="2.2" stroke-linejoin="miter"/>
</svg>
<div class="r" style="left:1122px;top:1059px;width:61px;height:3px;background:#76b9ed;"></div>
<svg class="r" style="left:1128px;top:1008px;" width="48" height="48" viewBox="0 0 48 48">
<circle cx="25.8" cy="24.9" r="12" fill="none" stroke="#4fb1ec" stroke-width="5"/>
<circle cx="25.8" cy="24.9" r="12" fill="none" stroke="#9bd9f9" stroke-width="2"/>
<rect x="17" y="22" width="22" height="4" fill="#9bd9f9"/>
<rect x="27" y="26.3" width="14" height="3.4" fill="#02030a"/>
<path d="M10 38.5Q4 37 11 26Q19 13 33 7.5Q40 5.5 40 10.5" fill="none" stroke="#f5c211" stroke-width="2.8" stroke-linecap="round"/>
</svg>
<div class="r" style="left:1197px;top:1059px;width:61px;height:3px;background:#76b9ed;"></div>
<svg class="r" style="left:1209px;top:1013px;" width="42" height="42" viewBox="0 0 42 42">
<circle cx="11" cy="11" r="9" fill="#28a8ea"/><circle cx="25" cy="25" r="9" fill="#28a8ea"/><circle cx="18" cy="18" r="14" fill="#28a8ea"/>
<circle cx="18" cy="18" r="11.5" fill="none" stroke="#fff" stroke-width="2" opacity="0.9"/>
<text x="10.5" y="25" font-family="Liberation Sans" font-weight="bold" font-size="19" fill="#fff">S</text>
<circle cx="30.5" cy="30.5" r="8.5" fill="#7fa61e" stroke="#fff" stroke-width="1.2"/>
<path d="M26.5 30.5L29.5 33.5L34.5 28" fill="none" stroke="#fff" stroke-width="1.8"/>
</svg>
<div class="r" style="left:1272px;top:1059px;width:61px;height:3px;background:#76b9ed;"></div>
<svg class="r" style="left:1284px;top:1014px;" width="36" height="36" viewBox="0 0 36 36">
<rect x="0" y="0" width="36" height="36" fill="#f6ece3"/>
<path d="M6 30L15 5H21L30 30H24L18 11L12 30Z" fill="#c8451d"/><path d="M12 22H24V25H12Z" fill="#c8451d"/>
<path d="M15 5L9 26" stroke="#8a2e12" stroke-width="1.5"/>
<text x="24" y="34" font-family="Liberation Sans" font-weight="bold" font-size="6" fill="#e00">LT</text>
</svg>
<svg class="r" style="left:1591px;top:1025px;" width="20" height="12" viewBox="0 0 20 12"><path d="M1 11L10 2L19 11" fill="none" stroke="#fff" stroke-width="1.3"/></svg>
<svg class="r" style="left:1623px;top:1022px;" width="28" height="18" viewBox="0 0 28 18">
<path d="M4.5 1V4.5M8.5 1V4.5M2.5 4.5H10.5V8Q10.5 11 6.5 11Q2.5 11 2.5 8Z M6.5 11V16.5H8" fill="none" stroke="#fff" stroke-width="1.2"/>
<rect x="8" y="5" width="17" height="11" fill="#fff" stroke="#fff" stroke-width="1"/>
<rect x="10" y="7" width="13" height="7" fill="#02030a"/><rect x="11" y="8" width="11" height="5" fill="#fff"/>
<rect x="25.5" y="8" width="1.5" height="5" fill="#fff"/>
</svg>
<svg class="r" style="left:1663px;top:1022px;" width="24" height="22" viewBox="0 0 24 22">
<path d="M2 20Q4 8 19 3" fill="none" stroke="#fff" stroke-width="1.2"/>
<path d="M6 20Q8 11 19 7.5" fill="none" stroke="#fff" stroke-width="1.2"/>
<path d="M10 20Q11.5 14 19 12" fill="none" stroke="#fff" stroke-width="1.2"/>
<circle cx="19" cy="19" r="1.5" fill="#fff"/>
</svg>
<svg class="r" style="left:1696px;top:1021px;" width="26" height="21" viewBox="0 0 26 21">
<path d="M1.5 7.5H6L12 1.5V19.5L6 13.5H1.5Z" fill="none" stroke="#fff" stroke-width="1.3"/>
<path d="M15 7Q17 10.5 15 14M18 4.5Q21.5 10.5 18 16.5M21 2Q26 10.5 21 19" fill="none" stroke="#fff" stroke-width="1.2"/>
</svg>
<div class="t" style="left:1763.60px;top:1009.54px;font-size:18.02px;line-height:18.02px;color:#fff;transform:scaleX(0.9181);">10:42</div>
<div class="t" style="left:1737.30px;top:1038.23px;font-size:18.75px;line-height:18.75px;color:#fff;transform:scaleX(0.9910);">01/02/2019</div>
<svg class="r" style="left:1858px;top:1019px;" width="27" height="26" viewBox="0 0 27 26"><path d="M1 1.5H24.5V18.5H16L12.75 22.5L9.5 18.5H1Z" fill="none" stroke="#fff" stroke-width="1.3"/></svg>
<div class="r" style="left:1913px;top:1002px;width:2px;height:60px;background:#6a6a6a;"></div>
</body></html>
